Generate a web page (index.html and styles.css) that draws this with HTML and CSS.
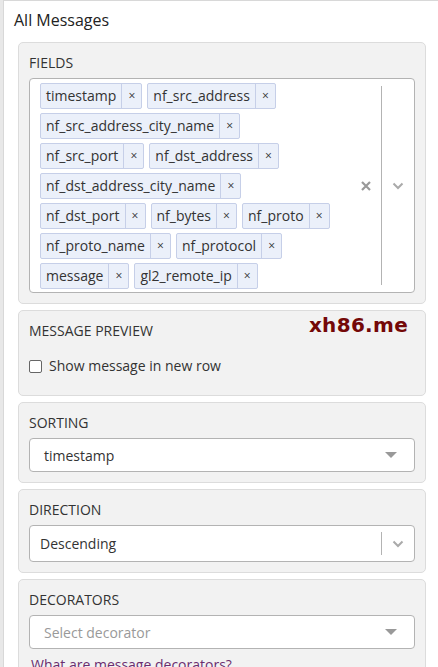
FILE: index.html
```html
<!DOCTYPE html>
<html>
<head>
<meta charset="utf-8">
<link rel="stylesheet" href="styles.css">
</head>
<body>
<div class="panel">
  <h2 class="title">All Messages</h2>
  <div class="body">
    <section class="group">
      <div class="label">FIELDS</div>
      <div class="multi">
        <div class="tags">
          <span class="tag"><span class="tag-text">timestamp</span><span class="tag-x">×</span></span>
          <span class="tag"><span class="tag-text">nf_src_address</span><span class="tag-x">×</span></span>
          <span class="tag"><span class="tag-text">nf_src_address_city_name</span><span class="tag-x">×</span></span>
          <span class="tag"><span class="tag-text">nf_src_port</span><span class="tag-x">×</span></span>
          <span class="tag"><span class="tag-text">nf_dst_address</span><span class="tag-x">×</span></span>
          <span class="tag"><span class="tag-text">nf_dst_address_city_name</span><span class="tag-x">×</span></span>
          <span class="tag"><span class="tag-text">nf_dst_port</span><span class="tag-x">×</span></span>
          <span class="tag"><span class="tag-text">nf_bytes</span><span class="tag-x">×</span></span>
          <span class="tag"><span class="tag-text">nf_proto</span><span class="tag-x">×</span></span>
          <span class="tag"><span class="tag-text">nf_proto_name</span><span class="tag-x">×</span></span>
          <span class="tag"><span class="tag-text">nf_protocol</span><span class="tag-x">×</span></span>
          <span class="tag"><span class="tag-text">message</span><span class="tag-x">×</span></span>
          <span class="tag"><span class="tag-text">gl2_remote_ip</span><span class="tag-x">×</span></span>
        </div>
        <div class="indicators">
          <span class="clear"><svg width="12" height="12" viewBox="0 0 12 12"><path d="M2 2 L10 10 M10 2 L2 10" stroke="#999" stroke-width="2.2" fill="none"/></svg></span>
          <span class="sep"></span>
          <span class="chev"><svg width="12" height="8" viewBox="0 0 12 8"><path d="M1.5 1.5 L6 6 L10.5 1.5" stroke="#aaa" stroke-width="2" fill="none"/></svg></span>
        </div>
      </div>
    </section>

    <section class="group preview">
      <div class="label">MESSAGE PREVIEW</div>
      <span class="watermark">xh86.me</span>
      <label class="check"><span class="box"></span>Show message in new row</label>
    </section>

    <section class="group">
      <div class="label">SORTING</div>
      <div class="select caret-select">
        <span class="value">timestamp</span>
        <svg class="caret" width="12" height="6" viewBox="0 0 12 6"><path d="M0 0 L12 0 L6 6 Z" fill="#999"/></svg>
      </div>
    </section>

    <section class="group">
      <div class="label">DIRECTION</div>
      <div class="select chev-select">
        <span class="value">Descending</span>
        <span class="sep short"></span>
        <span class="chev"><svg width="12" height="8" viewBox="0 0 12 8"><path d="M1.5 1.5 L6 6 L10.5 1.5" stroke="#aaa" stroke-width="2" fill="none"/></svg></span>
      </div>
    </section>

    <section class="group">
      <div class="label">DECORATORS</div>
      <div class="select caret-select">
        <span class="value placeholder">Select decorator</span>
        <svg class="caret" width="12" height="6" viewBox="0 0 12 6"><path d="M0 0 L12 0 L6 6 Z" fill="#999"/></svg>
      </div>
      <a class="link" href="#">What are message decorators?</a>
    </section>
  </div>
</div>
</body>
</html>
```

FILE: styles.css
```css
html, body {
  margin: 0;
  padding: 0;
  background: #e8e8e8;
  overflow: hidden;
  height: 667px;
}
body {
  font-family: "Open Sans", "Liberation Sans", sans-serif;
  color: #333;
  font-size: 14px;
}
.panel {
  margin-left: 3px;
  background: #fff;
  border: 1px solid #d8d8d8;
  border-right: none;
  border-bottom: none;
  min-height: 666px;
}
.title {
  margin: 0;
  font-weight: 400;
  font-size: 16px;
  line-height: 22px;
  padding: 8px 10px 11px 10px;
  color: #222;
}
.body {
  padding: 0 14px;
  width: 408px;
  display: flex;
  flex-direction: column;
  gap: 6px;
}
.group {
  background: #f2f2f2;
  border: 1px solid #dcdcdc;
  border-radius: 5px;
  padding: 10px;
  position: relative;
}
.label {
  font-size: 14px;
  line-height: 20px;
  color: #333;
  margin-bottom: 5px;
}
.multi {
  background: #fff;
  border: 1px solid #b3b3b3;
  border-radius: 4px;
  display: flex;
  min-height: 36px;
}
.tags {
  flex: 1;
  display: flex;
  flex-wrap: wrap;
  gap: 4px 5px;
  padding: 4px 8px 3px 10px;
  align-content: flex-start;
}
.tag {
  display: inline-flex;
  height: 26px;
  box-sizing: border-box;
  border: 1px solid #c6cfe8;
  background: #ebf0fa;
  border-radius: 2px;
  line-height: 24px;
  font-size: 14px;
  color: #333;
}
.tag-text {
  padding: 0 5px;
}
.tag-x {
  border-left: 1px solid #c6cfe8;
  width: 19px;
  text-align: center;
  font-size: 12px;
}
.indicators {
  display: flex;
  align-items: stretch;
  padding: 7px 0;
}
.clear {
  display: flex;
  align-items: center;
  justify-content: center;
  width: 31px;
}
.sep {
  width: 1px;
  background: #b3b3b3;
}
.chev {
  display: flex;
  align-items: center;
  justify-content: center;
  width: 32px;
}
.preview {
  height: 64px;
}
.watermark {
  position: absolute;
  right: 17px;
  top: 2px;
  color: #740808;
  font-family: "DejaVu Sans", sans-serif;
  font-weight: 700;
  font-size: 20px;
  letter-spacing: 0.3px;
}
.check {
  display: flex;
  align-items: center;
  margin-top: 15px;
  line-height: 20px;
  font-size: 14px;
  color: #333;
}
.box {
  width: 11px;
  height: 11px;
  border: 1px solid #666;
  border-radius: 2px;
  background: #fff;
  margin-right: 7px;
}
.select {
  background: #fff;
  border: 1px solid #b3b3b3;
  border-radius: 4px;
  display: flex;
  align-items: center;
}
.caret-select {
  height: 32px;
  padding: 0 17px 0 14px;
}
.caret-select .value {
  flex: 1;
}
.chev-select {
  height: 35px;
  padding-left: 10px;
}
.chev-select .value {
  flex: 1;
}
.sep.short {
  align-self: stretch;
  margin: 6px 0;
}
.placeholder {
  color: #999;
}
.link {
  display: block;
  color: #6b2d6f;
  text-decoration: none;
  margin-top: 6px;
  padding-left: 2px;
}
```
